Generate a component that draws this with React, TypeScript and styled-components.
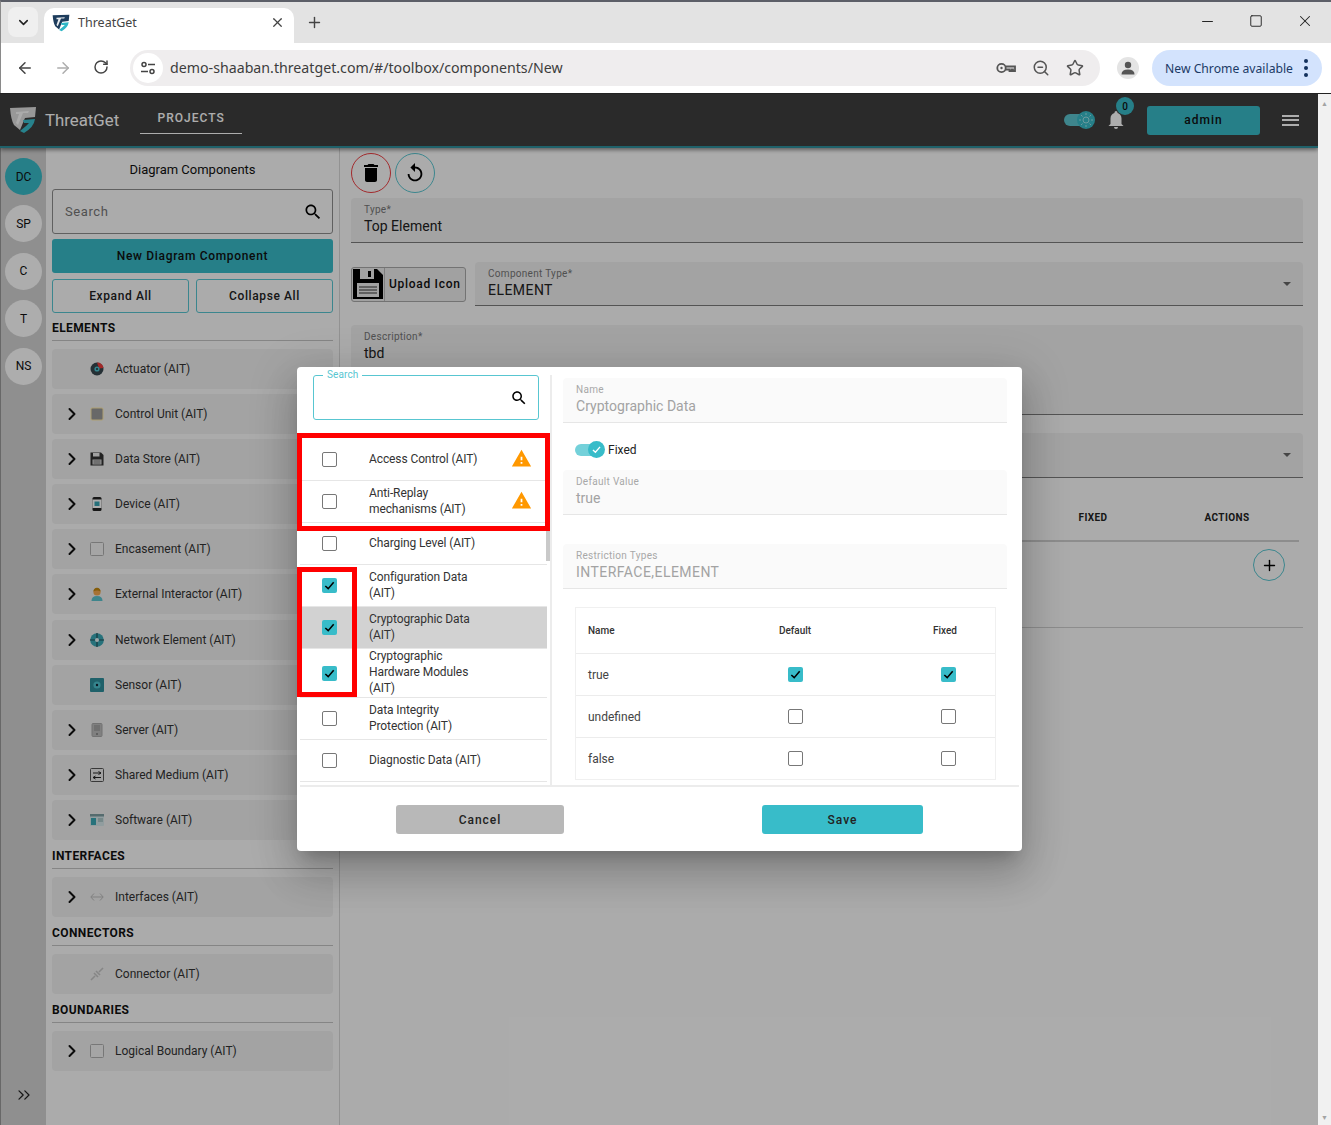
import React from 'react';
import styled, { createGlobalStyle } from 'styled-components';
import { ArrowLeft, ArrowRight, ChevronDown, ChevronRight, ChevronsRight, Minus, Plus, RotateCw, Square, Star, X, ZoomOut } from 'lucide-react';

const GlobalStyle = createGlobalStyle`
  html, body {
    margin: 0;
    padding: 0;
    background: #fff;
    overflow: hidden;
  }
  * { box-sizing: border-box; }
  body { font-family: Roboto, "Liberation Sans", sans-serif; }
`;

const Page = styled.div`
  width: 1331px;
  height: 1125px;
  display: flex;
  flex-direction: column;
  overflow: hidden;
`;

/* browser chrome */
const TabStrip = styled.div`
  height: 43px;
  flex: none;
  background: #e3e3e3;
  border-top: 2px solid #5c5f68;
  border-left: 1px solid #8a8a8a;
  display: flex;
  align-items: flex-end;
  padding-left: 7px;
`;

const TabSearch = styled.div`
  width: 30px;
  height: 30px;
  margin-bottom: 6px;
  border-radius: 8px;
  background: #efefef;
  display: flex;
  align-items: center;
  justify-content: center;
  color: #222;
`;

const Tab = styled.div`
  width: 250px;
  height: 35px;
  margin-left: 6px;
  background: #fff;
  border-radius: 10px 10px 0 0;
  display: flex;
  align-items: center;
  padding: 0 9px 6px 8px;
  font-family: "Noto Sans", sans-serif;
  font-size: 12.5px;
  color: #444;
`;

const TabTitle = styled.span`
  margin-left: 8px;
  flex: 1;
`;

const NewTab = styled.div`
  margin: 0 0 8px 12px;
  height: 26px;
  display: flex;
  align-items: center;
  color: #444;
`;

const WindowButtons = styled.div`
  margin-left: auto;
  height: 38px;
  align-self: flex-start;
  display: flex;
  align-items: center;
  gap: 33px;
  padding: 0 17px 0 0;
  color: #222;
`;

const Toolbar = styled.div`
  height: 50px;
  flex: none;
  background: #fff;
  display: flex;
  align-items: center;
  padding: 0 8px 0 0;
  border-left: 1px solid #8a8a8a;
`;

const NavButton = styled.div<{ $off?: boolean }>`
  width: 38px;
  display: flex;
  justify-content: center;
  color: ${(p) => (p.$off ? '#adadad' : '#444')};
`;

const NavGroup = styled.div`
  display: flex;
  margin-left: 5px;
`;

const Omnibox = styled.div`
  margin-left: 10px;
  width: 970px;
  height: 36px;
  border-radius: 18px;
  background: #efedee;
  display: flex;
  align-items: center;
  padding: 0 16px 0 3px;
  color: #444;
`;

const SiteIcon = styled.div`
  width: 30px;
  height: 30px;
  border-radius: 50%;
  background: #fff;
  display: flex;
  align-items: center;
  justify-content: center;
`;

const Url = styled.span`
  margin-left: 7px;
  padding-bottom: 1px;
  flex: 1;
  font-family: "Noto Sans", sans-serif;
  font-size: 14.2px;
  color: #3d3d3d;
`;

const OmniIcons = styled.div`
  display: flex;
  align-items: center;
  gap: 16px;
  color: #555;
`;

const Avatar = styled.div`
  margin-left: 17px;
  width: 22px;
  height: 22px;
  border-radius: 50%;
  background: #e4e4e4;
  display: flex;
  align-items: center;
  justify-content: center;
`;

const UpdatePill = styled.div`
  margin-left: 13px;
  width: 170px;
  height: 36px;
  border-radius: 18px;
  background: #d3e3fd;
  color: #1b3a66;
  display: flex;
  align-items: center;
  justify-content: space-between;
  padding: 0 14px 0 13px;
  font-family: "Noto Sans", sans-serif;
  font-size: 12.2px;
`;

const Dots = styled.div`
  display: flex;
  flex-direction: column;
  gap: 3px;
  i {
    width: 4px;
    height: 4px;
    border-radius: 50%;
    background: #12305c;
  }
`;

/* app frame */
const Frame = styled.div`
  flex: 1;
  min-height: 0;
  display: flex;
  border-top: 1px solid #222;
`;

const AppView = styled.div`
  position: relative;
  width: 1318px;
  height: 100%;
  display: flex;
  flex-direction: column;
  overflow: hidden;
  background: #fdfdfd;
`;

const PageScroll = styled.div`
  width: 13px;
  background: #f1f1f1;
  display: flex;
  flex-direction: column;
  justify-content: space-between;
  align-items: center;
  padding: 6px 0 3px;
  color: #a3a3a3;
  font-size: 7px;
  line-height: 8px;
`;

const AppHeader = styled.header`
  height: 54px;
  flex: none;
  background: #3f3f3f;
  border-bottom: 2px solid #2e8f9c;
  box-shadow: 0 2px 4px rgba(0, 0, 0, 0.45);
  display: flex;
  align-items: center;
  padding: 0 19px 0 9px;
  position: relative;
  z-index: 1;
`;

const Brand = styled.div`
  margin-left: 8px;
  font-size: 16.8px;
  color: #fff;
`;

const HeaderTab = styled.div`
  margin-left: 21px;
  width: 102px;
  height: 31px;
  align-self: flex-start;
  margin-top: 9px;
  border-bottom: 1px solid #fff;
  display: flex;
  align-items: center;
  justify-content: center;
  font-size: 12px;
  font-weight: 500;
  letter-spacing: 1px;
  color: #fff;
`;

const HeaderRight = styled.div`
  margin-left: auto;
  display: flex;
  align-items: center;
`;

const ThemeToggle = styled.div`
  width: 30px;
  height: 12px;
  border-radius: 6px;
  background: #5cc4cf;
  position: relative;
  svg {
    position: absolute;
    right: -1px;
    top: -3px;
  }
`;

const Bell = styled.div`
  position: relative;
  margin-left: 13px;
  width: 18px;
  height: 20px;
`;

const BellBadge = styled.span`
  position: absolute;
  left: 9px;
  top: -13px;
  width: 18px;
  height: 18px;
  border-radius: 50%;
  background: #38bcc9;
  color: #111;
  font-size: 10px;
  font-weight: 500;
  display: flex;
  align-items: center;
  justify-content: center;
`;

const AdminButton = styled.div`
  margin-left: 22px;
  width: 113px;
  height: 29px;
  border-radius: 3px;
  background: #38bcc9;
  color: #111;
  font-size: 12px;
  font-weight: 500;
  letter-spacing: 1px;
  display: flex;
  align-items: center;
  justify-content: center;
`;

const Burger = styled.div`
  margin-left: 22px;
  width: 17px;
  display: flex;
  flex-direction: column;
  gap: 2.5px;
  i {
    height: 2px;
    background: #fff;
  }
`;

const Body = styled.div`
  flex: 1;
  min-height: 0;
  display: flex;
`;

const Rail = styled.nav`
  width: 46px;
  flex: none;
  background: #d3d3d3;
  border-left: 1px solid #9a9a9a;
  display: flex;
  flex-direction: column;
  align-items: center;
  padding: 10px 0 0 0;
  gap: 10.4px;
  position: relative;
`;

const RailDot = styled.div<{ $active?: boolean }>`
  width: 37px;
  height: 37px;
  border-radius: 50%;
  background: ${(p) => (p.$active ? '#38bcc9' : '#fff')};
  color: #111;
  font-size: 12px;
  font-weight: 400;
  display: flex;
  align-items: center;
  justify-content: center;
`;

const RailExpand = styled.div`
  margin-top: auto;
  margin-bottom: 20px;
  color: #222;
  display: flex;
`;

const Panel = styled.aside`
  width: 294px;
  flex: none;
  padding: 0 6px;
  border-right: 1px solid #d8d8d8;
  background: #fdfdfd;
`;

const PanelTitle = styled.div`
  text-align: center;
  font-size: 13px;
  color: #111;
  height: 41px;
  line-height: 43px;
`;

const PanelSearch = styled.div`
  height: 45px;
  border: 1px solid #8e8e8e;
  border-radius: 3px;
  display: flex;
  align-items: center;
  justify-content: space-between;
  padding: 0 9px 0 12px;
  font-size: 13px;
  letter-spacing: 0.6px;
  color: #777;
`;

const NewButton = styled.div`
  margin-top: 5px;
  height: 34px;
  border-radius: 3px;
  background: #38bcc9;
  color: #111;
  font-size: 12px;
  font-weight: 500;
  letter-spacing: 0.67px;
  display: flex;
  align-items: center;
  justify-content: center;
`;

const ButtonPair = styled.div`
  margin-top: 6px;
  display: grid;
  grid-template-columns: 137px 137px;
  gap: 7px;
`;

const OutlineButton = styled.div`
  height: 34px;
  border: 1px solid #58c6d1;
  border-radius: 3px;
  color: #222;
  font-size: 12px;
  font-weight: 500;
  letter-spacing: 0.6px;
  display: flex;
  align-items: center;
  justify-content: center;
`;

const SectionTitle = styled.div<{ $first?: boolean }>`
  margin-top: ${(p) => (p.$first ? '5px' : '6.1px')};
  height: 20px;
  line-height: 20px;
  font-size: 12px;
  font-weight: 700;
  color: #111;
  letter-spacing: 0.4px;
`;

const SectionRule = styled.div`
  height: 1px;
  margin-top: 2px;
  margin-bottom: 8px;
  background: #c4c4c4;
`;

const ElementRow = styled.div`
  height: 40px;
  margin-bottom: 5.1px;
  background: #f0f0f0;
  border-radius: 4px;
  display: flex;
  align-items: center;
  padding-left: 15px;
  font-size: 12px;
  color: #333;
`;

const Caret = styled.div`
  width: 9px;
  display: flex;
  justify-content: center;
  color: #111;
  svg {
    flex: none;
  }
`;

const RowIconBox = styled.div`
  margin-left: 14px;
  width: 14px;
  height: 14px;
  display: flex;
  align-items: center;
  justify-content: center;
`;

const RowLabel = styled.span`
  margin-left: 11px;
`;

const Main = styled.main`
  flex: 1;
  min-width: 0;
  padding: 5px 15px 0 11px;
`;

const IconButtons = styled.div`
  display: flex;
  gap: 4px;
`;

const RoundButton = styled.div<{ $danger?: boolean; $size?: number }>`
  width: ${(p) => p.$size ?? 40}px;
  height: ${(p) => p.$size ?? 40}px;
  border-radius: 50%;
  border: 1px solid ${(p) => (p.$danger ? '#ef3e42' : '#58c6d1')};
  display: flex;
  align-items: center;
  justify-content: center;
  color: #000;
`;

const Field = styled.div<{ $h?: number; $top?: number; $grow?: boolean }>`
  position: relative;
  height: ${(p) => p.$h ?? 45}px;
  margin-top: ${(p) => p.$top ?? 0}px;
  ${(p) => (p.$grow ? 'flex: 1;' : '')}
  background: #f0f0f0;
  border-radius: 4px 4px 0 0;
  border-bottom: 1px solid #7c7c7c;
  padding: 6px 13px 0;
`;

const FieldLabel = styled.div`
  font-size: 10px;
  line-height: 12px;
  letter-spacing: 0.3px;
  color: #777;
`;

const FieldValue = styled.div<{ $caps?: boolean }>`
  margin-top: 1px;
  font-size: 14px;
  line-height: 18px;
  letter-spacing: ${(p) => (p.$caps ? '0.45px' : '0.02px')};
  color: #222;
`;

const SelectArrow = styled.span`
  position: absolute;
  right: 12px;
  top: 50%;
  margin-top: -2px;
  width: 0;
  height: 0;
  border-left: 4px solid transparent;
  border-right: 4px solid transparent;
  border-top: 4px solid #666;
`;

const UploadRow = styled.div`
  margin-top: 19px;
  display: flex;
  align-items: center;
  gap: 9px;
`;

const UploadButton = styled.div`
  width: 115px;
  height: 35px;
  border: 1px solid #aaa;
  border-radius: 3px;
  background: #eee;
  display: flex;
  align-items: center;
  font-size: 12px;
  font-weight: 500;
  letter-spacing: 0.7px;
  color: #111;
`;

const UploadIcon = styled.div`
  width: 33px;
  height: 100%;
  border-right: 1px solid #bbb;
  display: flex;
  align-items: center;
  justify-content: center;
  margin-right: 4px;
`;

const TableHead = styled.div`
  margin: 16px 4px 0 0;
  height: 48px;
  border-bottom: 2px solid #d0d0d0;
  display: flex;
  justify-content: flex-end;
  align-items: center;
  padding-right: 5px;
  font-size: 10px;
  font-weight: 700;
  letter-spacing: 0.4px;
  color: #222;
`;

const HeadCell = styled.div`
  width: 134px;
  text-align: center;
`;

const AddRow = styled.div`
  height: 86px;
  border-bottom: 1px solid #d0d0d0;
  display: flex;
  justify-content: flex-end;
  padding: 7px 18px 0 0;
`;

/* modal */
const Backdrop = styled.div`
  position: absolute;
  inset: 0;
  z-index: 5;
  background: rgba(0, 0, 0, 0.32);
`;

const Dialog = styled.div`
  position: absolute;
  z-index: 6;
  left: 297px;
  top: 273px;
  width: 725px;
  height: 484px;
  background: #fff;
  border-radius: 4px;
  box-shadow: 0 11px 15px -7px rgba(0, 0, 0, 0.2), 0 24px 38px 3px rgba(0, 0, 0, 0.14), 0 9px 46px 8px rgba(0, 0, 0, 0.12);
  display: flex;
  flex-direction: column;
`;

const DialogBody = styled.div`
  height: 418px;
  display: flex;
  padding-right: 3px;
`;

const ListColumn = styled.div`
  width: 255px;
  flex: none;
  margin-top: 8px;
  padding-left: 3px;
  border-right: 2px solid #ececec;
  display: flex;
  flex-direction: column;
  position: relative;
`;

const DialogSearch = styled.div`
  position: relative;
  margin-left: 13px;
  width: 226px;
  height: 45px;
  flex: none;
  border: 1px solid #58c6d1;
  border-radius: 3px;
  display: flex;
  align-items: center;
  justify-content: flex-end;
  padding-right: 10px;
`;

const SearchLegend = styled.span`
  position: absolute;
  left: 9px;
  top: -7px;
  padding: 0 4px;
  background: #fff;
  font-size: 10px;
  line-height: 12px;
  letter-spacing: 0.1px;
  color: #58c6d1;
`;

const AttrList = styled.div`
  margin-top: 19px;
  width: 247px;
  display: flex;
  flex-direction: column;
`;

const AttrRow = styled.div<{ $selected?: boolean }>`
  min-height: 42px;
  display: flex;
  align-items: center;
  border-bottom: 1px solid #e6e6e6;
  background: ${(p) => (p.$selected ? '#d2d2d2' : 'transparent')};
  font-size: 12px;
  line-height: 16px;
  letter-spacing: -0.1px;
  color: #333;
  padding-left: 22px;
  position: relative;
`;

const AttrName = styled.div`
  margin-left: 32px;
  width: 120px;
  transform: translateY(-1px);
`;

const WarnIcon = styled.div`
  position: absolute;
  right: 15px;
  top: 50%;
  margin-top: -12px;
  display: flex;
`;

const ListScrollThumb = styled.div`
  position: absolute;
  right: 0;
  top: 125px;
  width: 4px;
  height: 61px;
  background: #c9c9c9;
`;

const CheckBox = styled.span<{ $checked?: boolean }>`
  width: 15px;
  height: 15px;
  flex: none;
  border-radius: 2px;
  border: ${(p) => (p.$checked ? '0' : '1.5px solid #777')};
  background: ${(p) => (p.$checked ? '#38bcc9' : '#fff')};
  display: inline-flex;
  align-items: center;
  justify-content: center;
`;

const DetailColumn = styled.div`
  flex: 1;
  padding: 11px 12px 0 11px;
  display: flex;
  flex-direction: column;
`;

const DisabledField = styled.div<{ $top?: number }>`
  height: 45px;
  flex: none;
  margin-top: ${(p) => p.$top ?? 0}px;
  background: #fafafa;
  border-radius: 4px 4px 0 0;
  border-bottom: 1px solid #e6e6e6;
  padding: 6px 13px 0;
`;

const DisabledLabel = styled(FieldLabel)`
  color: #a8a8a8;
`;

const DisabledValue = styled(FieldValue)`
  color: #a3a3a3;
`;

const ToggleRow = styled.div`
  height: 47px;
  flex: none;
  display: flex;
  align-items: center;
  padding: 6px 0 0 12px;
  font-size: 12px;
  color: #222;
`;

const ToggleTrack = styled.div`
  width: 28px;
  height: 12px;
  border-radius: 6px;
  background: #74d1da;
  position: relative;
  margin-right: 5px;
`;

const ToggleKnob = styled.div`
  position: absolute;
  right: -2px;
  top: -3px;
  width: 17px;
  height: 17px;
  border-radius: 50%;
  background: #38bcc9;
  display: flex;
  align-items: center;
  justify-content: center;
`;

const ValueTable = styled.div`
  margin: 18px 11px 0 12px;
  height: 173px;
  flex: none;
  border: 1px solid #f0f0f0;
  display: flex;
  flex-direction: column;
`;

const ValueRow = styled.div<{ $head?: boolean }>`
  flex: ${(p) => (p.$head ? '0 0 46px' : '1')};
  display: grid;
  grid-template-columns: 1fr 100px 86px;
  column-gap: 60px;
  align-items: center;
  padding: 0 4px 0 12px;
  border-bottom: 1px solid #ececec;
  font-size: ${(p) => (p.$head ? '10px' : '12px')};
  font-weight: ${(p) => (p.$head ? 500 : 400)};
  color: ${(p) => (p.$head ? '#333' : '#444')};
  &:last-child {
    border-bottom: 0;
  }
`;

const ValueCell = styled.div<{ $shift?: number }>`
  display: flex;
  justify-content: center;
  margin-right: ${(p) => p.$shift ?? 0}px;
`;

const DialogFooter = styled.div`
  flex: 1;
  margin: 0 3px;
  border-top: 2px solid #ececec;
  display: flex;
  align-items: flex-start;
  padding: 18px 0 0 96px;
`;

const CancelButton = styled.div`
  width: 168px;
  height: 29px;
  border-radius: 3px;
  background: #b8b8b8;
  color: #222;
  font-size: 12px;
  font-weight: 500;
  letter-spacing: 1px;
  display: flex;
  align-items: center;
  justify-content: center;
`;

const SaveButton = styled(CancelButton)`
  margin-left: 198px;
  width: 161px;
  background: #38bcc9;
`;

const RedFrame = styled.div<{ $w: number; $h: number; $x: number; $y: number }>`
  position: absolute;
  z-index: 7;
  left: ${(p) => p.$x}px;
  top: ${(p) => p.$y}px;
  width: ${(p) => p.$w}px;
  height: ${(p) => p.$h}px;
  border: 5px solid #ff0000;
  pointer-events: none;
`;

const SearchGlyph = ({ size = 20 }: { size?: number }) => (
  <svg width={size} height={size} viewBox="0 0 24 24" fill="#000">
    <path d="M15.5 14h-.79l-.28-.27C15.41 12.59 16 11.11 16 9.5 16 5.91 13.09 3 9.5 3S3 5.91 3 9.5 5.91 16 9.5 16c1.61 0 3.09-.59 4.23-1.57l.27.28v.79l5 4.99L20.49 19l-4.99-5zm-6 0C7.01 14 5 11.99 5 9.5S7.01 5 9.5 5 14 7.01 14 9.5 11.99 14 9.5 14z" />
  </svg>
);

const Logo = ({ size, top, bottom }: { size: number; top: string; bottom: string }) => (
  <svg width={size} height={size} viewBox="0 0 28 28">
    <path d="M1 2 L27 1 L26 11 L16 12 L11 24 L5 19 Q2 14 1 2Z" fill={top} />
    <path d="M7 6 L20 5 L19 7 L14 7 L9 19 L7 17 L10 8 L7 8Z" fill="#fff" opacity="0.9" />
    <path d="M14 14 L26 13 Q25 21 15 27 L11 25 L17 20 L20 17 L15 17Z" fill={bottom} />
  </svg>
);

const Tick = ({ color = '#000', size = 13 }: { color?: string; size?: number }) => (
  <svg width={size} height={size} viewBox="0 0 14 14" fill="none">
    <path d="M2.5 7.5 L5.6 10.4 L11.5 3.6" stroke={color} strokeWidth="1.7" />
  </svg>
);

const Warning = () => (
  <svg width="21" height="21" viewBox="0 0 24 24" fill="#ff9800">
    <path d="M1 21h22L12 2 1 21zm12-3h-2v-2h2v2zm0-4h-2v-4h2v4z" />
  </svg>
);

const PasswordKey = () => (
  <svg width="20" height="14" viewBox="0 0 20 14" fill="none" stroke="#555" strokeWidth="1.8">
    <circle cx="5.500" cy="7" r="4.200" />
    <circle cx="5.500" cy="7" r="1.200" fill="#555" stroke="none" />
    <path d="M9.700 5.500H19V10h-2V8.500h-1.500V10h-2V8.500H9.700" />
  </svg>
);

const SiteControls = () => (
  <svg width="16" height="16" viewBox="0 0 16 16" fill="none" stroke="#444" strokeWidth="1.5">
    <circle cx="4" cy="4.500" r="2" />
    <path d="M8 4.500h7M1 11.500h7" />
    <circle cx="12" cy="11.500" r="2" />
  </svg>
);

const RowIcon = ({ kind }: { kind: string }) => {
  switch (kind) {
    case 'actuator':
      return (
        <svg width="14" height="14" viewBox="0 0 14 14">
          <circle cx="7" cy="7" r="6.5" fill="#37474f" />
          <path d="M7 .5 A6.5 6.5 0 0 1 13.4 6 L9 6.5 Z" fill="#ef3b3b" />
          <circle cx="7" cy="7" r="2.6" fill="#4fc3d0" />
          <circle cx="7" cy="7" r="1" fill="#263238" />
        </svg>
      );
    case 'control':
      return (
        <svg width="14" height="14" viewBox="0 0 14 14">
          <rect x="0.5" y="0.5" width="13" height="13" rx="2" fill="#ffe9a8" />
          <rect x="1.5" y="1.5" width="11" height="11" rx="1" fill="#9a9a9a" />
        </svg>
      );
    case 'store':
      return (
        <svg width="14" height="14" viewBox="0 0 14 14">
          <path d="M0.5 0.5h10.5l2.5 2.5v10.5h-13z" fill="#333" />
          <rect x="3" y="1" width="6.5" height="3.5" fill="#eee" />
          <rect x="2.5" y="7.5" width="9" height="5" fill="#ddd" />
          <path d="M3.5 9h7M3.5 11h7" stroke="#555" strokeWidth="0.8" />
        </svg>
      );
    case 'device':
      return (
        <svg width="14" height="14" viewBox="0 0 14 14">
          <rect x="2.5" y="0" width="9" height="14" rx="1.5" fill="#222" />
          <rect x="2.5" y="2.5" width="9" height="8.5" fill="#fff" />
          <rect x="4.5" y="4.5" width="5" height="4.5" fill="#38a6b4" />
        </svg>
      );
    case 'box':
      return (
        <svg width="14" height="14" viewBox="0 0 14 14">
          <rect x="0.5" y="0.5" width="13" height="13" rx="1" fill="#f4f4f4" stroke="#b0b0b0" />
        </svg>
      );
    case 'person':
      return (
        <svg width="14" height="14" viewBox="0 0 14 14">
          <path d="M1.5 14 Q1.5 9 7 9 Q12.5 9 12.5 14Z" fill="#5cc4cf" />
          <circle cx="7" cy="5" r="3.6" fill="#f5a94e" />
          <path d="M3.4 4.5 Q4 .6 7 .8 Q10 .6 10.6 4.5 Q7 2.5 3.4 4.5Z" fill="#c48a10" />
        </svg>
      );
    case 'network':
      return (
        <svg width="14" height="14" viewBox="0 0 14 14">
          <circle cx="7" cy="7" r="6.8" fill="#3aa8b6" />
          <path d="M7 0v14M0 7h14" stroke="#22515a" strokeWidth="1.2" />
          <circle cx="7" cy="7" r="2" fill="#e8f6f8" />
        </svg>
      );
    case 'sensor':
      return (
        <svg width="14" height="14" viewBox="0 0 14 14">
          <rect width="14" height="14" rx="1" fill="#2f8f9c" />
          <circle cx="7" cy="7" r="3.6" fill="#4fc3d0" />
          <circle cx="7" cy="7" r="1.2" fill="#123" />
        </svg>
      );
    case 'server':
      return (
        <svg width="14" height="14" viewBox="0 0 14 14">
          <rect x="2" y="0.5" width="10" height="13" rx="1" fill="#bdbdbd" stroke="#a8a8a8" />
          <path d="M4 3h6M4 5h6M4 7h6" stroke="#8d8d8d" />
          <circle cx="7" cy="11" r="0.9" fill="#777" />
        </svg>
      );
    case 'shared':
      return (
        <svg width="14" height="14" viewBox="0 0 14 14">
          <rect x="0.5" y="0.5" width="13" height="13" rx="1" fill="#eee" stroke="#555" />
          <path d="M3 5h8M8.5 3.5L11 5 8.5 6.5M11 9.5H3M5.5 8L3 9.5 5.5 11" stroke="#222" fill="none" />
        </svg>
      );
    case 'software':
      return (
        <svg width="14" height="14" viewBox="0 0 14 14">
          <rect y="1" width="14" height="12" rx="1" fill="#d6e8ea" />
          <rect y="1" width="14" height="2.5" fill="#7e9ea3" />
          <rect x="1" y="5" width="5" height="7" fill="#3aa8b6" />
          <path d="M8 6h5M8 8h5" stroke="#8aa" />
        </svg>
      );
    case 'interface':
      return (
        <svg width="14" height="14" viewBox="0 0 14 14" fill="none" stroke="#bdbdbd" strokeWidth="1">
          <path d="M4 3.5 L.8 7 L4 10.5M10 3.5 L13.2 7 L10 10.5M1 7h12" />
        </svg>
      );
    case 'connector':
      return (
        <svg width="14" height="14" viewBox="0 0 14 14" fill="none" stroke="#c6c6c6" strokeWidth="1.6">
          <path d="M1 13L5 9M9 5l4-4M4 6l4 4M6 4l4 4" />
        </svg>
      );
    default:
      return null;
  }
};

const elements = [
  { name: 'Actuator (AIT)', icon: 'actuator', leaf: true },
  { name: 'Control Unit (AIT)', icon: 'control' },
  { name: 'Data Store (AIT)', icon: 'store' },
  { name: 'Device (AIT)', icon: 'device' },
  { name: 'Encasement (AIT)', icon: 'box' },
  { name: 'External Interactor (AIT)', icon: 'person' },
  { name: 'Network Element (AIT)', icon: 'network' },
  { name: 'Sensor (AIT)', icon: 'sensor', leaf: true },
  { name: 'Server (AIT)', icon: 'server' },
  { name: 'Shared Medium (AIT)', icon: 'shared' },
  { name: 'Software (AIT)', icon: 'software' },
];

const attributes = [
  { name: 'Access Control (AIT)', warn: true },
  { name: 'Anti-Replay mechanisms (AIT)', warn: true },
  { name: 'Charging Level (AIT)' },
  { name: 'Configuration Data (AIT)', checked: true },
  { name: 'Cryptographic Data (AIT)', checked: true, selected: true },
  { name: 'Cryptographic Hardware Modules (AIT)', checked: true },
  { name: 'Data Integrity Protection (AIT)' },
  { name: 'Diagnostic Data (AIT)' },
];

const values = [
  { name: 'true', on: true },
  { name: 'undefined', on: false },
  { name: 'false', on: false },
];

type RowProps = { name: string; icon: string; leaf?: boolean };

const Row = ({ name, icon, leaf }: RowProps) => (
  <ElementRow>
    <Caret>{leaf ? null : <ChevronRight size={20} strokeWidth={2.4} />}</Caret>
    <RowIconBox>
      <RowIcon kind={icon} />
    </RowIconBox>
    <RowLabel>{name}</RowLabel>
  </ElementRow>
);

const Check = ({ on }: { on?: boolean }) => <CheckBox $checked={on}>{on ? <Tick /> : null}</CheckBox>;

const App = () => {
  return (
    <Page>
      <GlobalStyle />
      <TabStrip>
        <TabSearch>
          <ChevronDown size={15} strokeWidth={2.5} />
        </TabSearch>
        <Tab>
          <Logo size={18} top="#1d3c5c" bottom="#2fb6c6" />
          <TabTitle>ThreatGet</TabTitle>
          <X size={15} strokeWidth={2} />
        </Tab>
        <NewTab>
          <Plus size={17} />
        </NewTab>
        <WindowButtons>
          <Minus size={17} strokeWidth={1.4} />
          <Square size={14} strokeWidth={1.6} />
          <X size={18} strokeWidth={1.4} />
        </WindowButtons>
      </TabStrip>
      <Toolbar>
        <NavGroup>
          <NavButton>
            <ArrowLeft size={18} />
          </NavButton>
          <NavButton $off>
            <ArrowRight size={18} />
          </NavButton>
          <NavButton>
            <RotateCw size={16} strokeWidth={2.2} />
          </NavButton>
        </NavGroup>
        <Omnibox>
          <SiteIcon>
            <SiteControls />
          </SiteIcon>
          <Url>demo-shaaban.threatget.com/#/toolbox/components/New</Url>
          <OmniIcons>
            <PasswordKey />
            <ZoomOut size={18} strokeWidth={2} />
            <Star size={18} strokeWidth={2} />
          </OmniIcons>
        </Omnibox>
        <Avatar>
          <svg width="14" height="14" viewBox="0 0 14 14" fill="#555">
            <circle cx="7" cy="4" r="3.2" />
            <path d="M0.5 13.5 Q0.5 8.5 7 8.5 Q13.5 8.5 13.5 13.5Z" />
          </svg>
        </Avatar>
        <UpdatePill>
          New Chrome available
          <Dots>
            <i />
            <i />
            <i />
          </Dots>
        </UpdatePill>
      </Toolbar>
      <Frame>
        <AppView>
          <AppHeader>
            <Logo size={28} top="#e0e0e0" bottom="#3ac0cf" />
            <Brand>ThreatGet</Brand>
            <HeaderTab>PROJECTS</HeaderTab>
            <HeaderRight>
              <ThemeToggle>
                <svg width="18" height="18" viewBox="0 0 18 18">
                  <circle cx="9" cy="9" r="9" fill="#38bcc9" />
                  <circle cx="9" cy="9" r="3" fill="none" stroke="#9fe4ea" />
                  <path d="M9 2v2M9 14v2M2 9h2M14 9h2M4 4l1.5 1.5M12.5 12.5L14 14M14 4l-1.5 1.5M5.5 12.5L4 14" stroke="#9fe4ea" />
                </svg>
              </ThemeToggle>
              <Bell>
                <svg width="18" height="20" viewBox="0 0 18 20" fill="#fff">
                  <path d="M9 1a1.5 1.5 0 0 1 1.5 1.5v.6C13 3.8 14.5 6 14.5 8.5V14l2 2H1.5l2-2V8.500C3.500 6 5 3.800 7.500 3.100v-.6A1.500 1.500 0 0 1 9 1z" />
                  <path d="M7 17h4a2 2 0 0 1-4 0z" />
                </svg>
                <BellBadge>0</BellBadge>
              </Bell>
              <AdminButton>admin</AdminButton>
              <Burger>
                <i />
                <i />
                <i />
              </Burger>
            </HeaderRight>
          </AppHeader>
          <Body>
            <Rail>
              <RailDot $active>DC</RailDot>
              <RailDot>SP</RailDot>
              <RailDot>C</RailDot>
              <RailDot>T</RailDot>
              <RailDot>NS</RailDot>
              <RailExpand>
                <ChevronsRight size={20} strokeWidth={1.5} />
              </RailExpand>
            </Rail>
            <Panel>
              <PanelTitle>Diagram Components</PanelTitle>
              <PanelSearch>
                Search
                <SearchGlyph />
              </PanelSearch>
              <NewButton>New Diagram Component</NewButton>
              <ButtonPair>
                <OutlineButton>Expand All</OutlineButton>
                <OutlineButton>Collapse All</OutlineButton>
              </ButtonPair>
              <SectionTitle $first>ELEMENTS</SectionTitle>
              <SectionRule />
              {elements.map((el) => (
                <Row key={el.name} {...el} />
              ))}
              <SectionTitle>INTERFACES</SectionTitle>
              <SectionRule />
              <Row name="Interfaces (AIT)" icon="interface" />
              <SectionTitle>CONNECTORS</SectionTitle>
              <SectionRule />
              <Row name="Connector (AIT)" icon="connector" leaf />
              <SectionTitle>BOUNDARIES</SectionTitle>
              <SectionRule />
              <Row name="Logical Boundary (AIT)" icon="box" />
            </Panel>
            <Main>
              <IconButtons>
                <RoundButton $danger>
                  <svg width="24" height="24" viewBox="0 0 24 24" fill="#000">
                    <path d="M6 19c0 1.100.9 2 2 2h8c1.100 0 2-.9 2-2V7H6v12zM19 4h-3.500l-1-1h-5l-1 1H5v2h14V4z" />
                  </svg>
                </RoundButton>
                <RoundButton>
                  <svg width="22" height="22" viewBox="0 0 24 24" fill="#000">
                    <path d="M12 5V1L7 6l5 5V7c3.310 0 6 2.690 6 6s-2.690 6-6 6-6-2.690-6-6H4c0 4.420 3.580 8 8 8s8-3.580 8-8-3.580-8-8-8z" />
                  </svg>
                </RoundButton>
              </IconButtons>
              <Field $top={5}>
                <FieldLabel>Type*</FieldLabel>
                <FieldValue>Top Element</FieldValue>
              </Field>
              <UploadRow>
                <UploadButton>
                  <UploadIcon>
                    <svg width="30" height="30" viewBox="0 0 30 30">
                      <path d="M0 0h24l6 6v24H0z" fill="#000" />
                      <rect x="7" y="0" width="14" height="10" fill="#eee" />
                      <rect x="15" y="2" width="3" height="6" fill="#000" />
                      <rect x="4" y="14" width="22" height="14" fill="#eee" />
                      <path d="M6 18h18M6 21h18M6 24h18" stroke="#333" />
                    </svg>
                  </UploadIcon>
                  Upload Icon
                </UploadButton>
                <Field $h={44} $grow>
                  <FieldLabel>Component Type*</FieldLabel>
                  <FieldValue $caps>ELEMENT</FieldValue>
                  <SelectArrow />
                </Field>
              </UploadRow>
              <Field $h={90} $top={19}>
                <FieldLabel>Description*</FieldLabel>
                <FieldValue>tbd</FieldValue>
              </Field>
              <Field $top={18}>
                <SelectArrow />
              </Field>
              <TableHead>
                <HeadCell>FIXED</HeadCell>
                <HeadCell>ACTIONS</HeadCell>
              </TableHead>
              <AddRow>
                <RoundButton $size={32}>
                  <Plus size={17} strokeWidth={2} />
                </RoundButton>
              </AddRow>
            </Main>
          </Body>
          <Backdrop />
          <Dialog>
            <DialogBody>
              <ListColumn>
                <DialogSearch>
                  <SearchLegend>Search</SearchLegend>
                  <SearchGlyph size={18} />
                </DialogSearch>
                <AttrList>
                  {attributes.map((a) => (
                    <AttrRow key={a.name} $selected={a.selected}>
                      <Check on={a.checked} />
                      <AttrName>{a.name}</AttrName>
                      {a.warn ? (
                        <WarnIcon>
                          <Warning />
                        </WarnIcon>
                      ) : null}
                    </AttrRow>
                  ))}
                </AttrList>
                <ListScrollThumb />
              </ListColumn>
              <DetailColumn>
                <DisabledField>
                  <DisabledLabel>Name</DisabledLabel>
                  <DisabledValue>Cryptographic Data</DisabledValue>
                </DisabledField>
                <ToggleRow>
                  <ToggleTrack>
                    <ToggleKnob>
                      <Tick color="#fff" size={11} />
                    </ToggleKnob>
                  </ToggleTrack>
                  Fixed
                </ToggleRow>
                <DisabledField>
                  <DisabledLabel>Default Value</DisabledLabel>
                  <DisabledValue>true</DisabledValue>
                </DisabledField>
                <DisabledField $top={29}>
                  <DisabledLabel>Restriction Types</DisabledLabel>
                  <DisabledValue $caps>INTERFACE,ELEMENT</DisabledValue>
                </DisabledField>
                <ValueTable>
                  <ValueRow $head>
                    <div>Name</div>
                    <ValueCell>Default</ValueCell>
                    <ValueCell $shift={6}>Fixed</ValueCell>
                  </ValueRow>
                  {values.map((v) => (
                    <ValueRow key={v.name}>
                      <div>{v.name}</div>
                      <ValueCell>
                        <Check on={v.on} />
                      </ValueCell>
                      <ValueCell>
                        <Check on={v.on} />
                      </ValueCell>
                    </ValueRow>
                  ))}
                </ValueTable>
              </DetailColumn>
            </DialogBody>
            <DialogFooter>
              <CancelButton>Cancel</CancelButton>
              <SaveButton>Save</SaveButton>
            </DialogFooter>
          </Dialog>
          <RedFrame $x={297} $y={339} $w={253} $h={98} />
          <RedFrame $x={297} $y={473} $w={60} $h={130} />
        </AppView>
        <PageScroll>
          <span>▲</span>
          <span>▼</span>
        </PageScroll>
      </Frame>
    </Page>
  );
};

export default App;
